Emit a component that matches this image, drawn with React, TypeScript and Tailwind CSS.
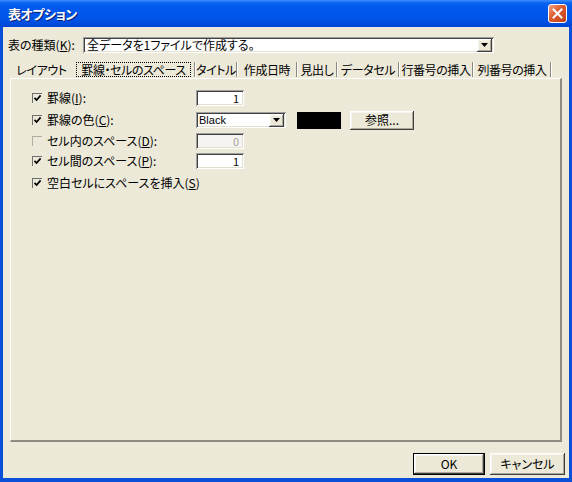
import React from 'react';

const bevelOut =
  'bg-[#ECE9D8] shadow-[inset_-1px_-1px_0_#404040,inset_1px_1px_0_#ffffff,inset_-2px_-2px_0_#ACA899,inset_2px_2px_0_#F5F4EF]';
const sunken =
  'shadow-[inset_1px_1px_0_#A0A0A0,inset_-1px_-1px_0_#ffffff,inset_2px_2px_0_#404040,inset_-2px_-2px_0_#E3E0D3]';

const Check: React.FC<{ checked?: boolean; disabled?: boolean }> = ({ checked, disabled }) => (
  <span
    className={
      'relative inline-block w-[10px] h-[10px] shrink-0 border-t border-l ' +
      (disabled ? 'border-[#B0AEA3]' : 'border-[#6F6F6F]')
    }
  >
    {checked && (
      <svg className="absolute left-[0px] top-[0px]" width="9" height="9" viewBox="0 0 9 9">
        <path d="M1.5 3.8 L3.6 6 L7.6 1.4" stroke="#000" strokeWidth="1.7" fill="none" />
      </svg>
    )}
  </span>
);

const DropBtn: React.FC = () => (
  <span className={'flex items-center justify-center w-[15px] h-[13px] ' + bevelOut}>
    <svg width="7" height="4" viewBox="0 0 7 4">
      <path d="M0 0 H7 L3.5 4 Z" fill="#000" />
    </svg>
  </span>
);

const NumBox: React.FC<{ value: string; disabled?: boolean }> = ({ value, disabled }) => (
  <div
    className={
      'w-[48px] h-[16px] flex items-center justify-end pr-[5px] ' +
      sunken +
      (disabled ? ' bg-[#F5F4F0] text-[#A6A39A]' : ' bg-white')
    }
  >
    <span className="text-[11px] leading-none">{value}</span>
  </div>
);

const Acc: React.FC<{ k: string }> = ({ k }) => <span className="underline underline-offset-[1px]">{k}</span>;

const tabs: { label: string; w: string; sel?: boolean; sep: boolean }[] = [
  { label: 'レイアウト', w: 'w-[63px]', sep: false },
  { label: '罫線・セルのスペース', w: 'w-[121px]', sel: true, sep: true },
  { label: 'タイトル', w: 'w-[40px]', sep: true },
  { label: '作成日時', w: 'w-[58px]', sep: true },
  { label: '見出し', w: 'w-[38px]', sep: true },
  { label: 'データセル', w: 'w-[60px]', sep: true },
  { label: '行番号の挿入', w: 'w-[72px]', sep: true },
  { label: '列番号の挿入', w: 'w-[76px]', sep: true },
];

export default function App() {
  return (
    <div className="w-[572px] h-[482px] flex flex-col bg-[#0A4FD8] text-[12px] text-black font-['Noto_Sans_CJK_JP','Noto_Sans',sans-serif] [font-feature-settings:'palt'] overflow-hidden">
      {/* title bar */}
      <div className="h-[27px] shrink-0 flex items-center justify-between pl-[8px] pr-[5px] bg-[linear-gradient(#3D8EFF_0px,#0A63F0_3px,#0058EE_8px,#0055E8_18px,#0047D8_27px)]">
        <span className="text-white font-bold text-[13px] [text-shadow:1px_1px_0_#0A1E6E] tracking-[-0.5px]">表オプション</span>
        <span className="w-[19px] h-[19px] rounded-[3px] border border-white flex items-center justify-center bg-[linear-gradient(135deg,#F0A386,#DE5A2E_45%,#C23F15)]">
          <svg width="11" height="11" viewBox="0 0 11 11">
            <path d="M1.5 1.5 L9.5 9.5 M9.5 1.5 L1.5 9.5" stroke="#fff" strokeWidth="2" strokeLinecap="square" />
          </svg>
        </span>
      </div>

      {/* body */}
      <div className="flex-1 mx-[3px] mb-[4px] bg-[#ECE9D8] flex flex-col">
        {/* table kind */}
        <div className="mt-[10px] pl-[5px] flex items-center h-[16px]">
          <span className="w-[75px] whitespace-nowrap">
            表の種類(<Acc k="K" />):
          </span>
          <div className={'w-[411px] h-[16px] bg-white flex items-center justify-between pl-[4px] pr-[2px] ' + sunken}>
            <span className="whitespace-nowrap leading-none">全データを1ファイルで作成する。</span>
            <DropBtn />
          </div>
        </div>

        {/* tabs */}
        <div className="mt-[8px] h-[17px] pl-[7px] flex items-stretch tracking-[-0.4px]">
          {tabs.map((t) => (
            <React.Fragment key={t.label}>
              <div className={t.w + ' relative flex items-center justify-center whitespace-nowrap'}>
                {t.sel && (
                  <span className="absolute left-[3px] right-[3px] top-[1px] bottom-[1px] border border-dotted border-black" />
                )}
                <span className="leading-none">{t.label}</span>
              </div>
              {t.sep && (
                <div className="w-[2px] my-[1px] border-l border-[#8A877C] bg-white" />
              )}
            </React.Fragment>
          ))}
        </div>

        {/* panel */}
        <div className="ml-[7px] w-[552px] h-[364px] border-t border-l border-white border-r-2 border-b-2 border-r-[#8E8B80] border-b-[#8E8B80] flex flex-col pl-[21px]">
          <div className="mt-[11px] h-[16px] flex items-center">
            <div className="w-[164px] flex items-center gap-[5px]">
              <Check checked />
              <span>
                罫線(<Acc k="I" />):
              </span>
            </div>
            <NumBox value="1" />
          </div>

          <div className="mt-[6px] h-[16px] flex items-center">
            <div className="w-[164px] flex items-center gap-[5px]">
              <Check checked />
              <span>
                罫線の色(<Acc k="C" />):
              </span>
            </div>
            <div className={'w-[90px] h-[16px] bg-white flex items-center justify-between pl-[3px] pr-[2px] ' + sunken}>
              <span className="text-[11px] leading-none font-['Liberation_Sans',sans-serif]">Black</span>
              <DropBtn />
            </div>
            <div className="ml-[11px] w-[44px] h-[17px] bg-black" />
            <div className={'ml-[9px] w-[64px] h-[19px] flex items-center justify-center ' + bevelOut}>
              <span className="leading-none">参照...</span>
            </div>
          </div>

          <div className="mt-[5px] h-[16px] flex items-center">
            <div className="w-[164px] flex items-center gap-[5px]">
              <Check disabled />
              <span className="text-black">
                セル内のスペース(<Acc k="D" />):
              </span>
            </div>
            <NumBox value="0" disabled />
          </div>

          <div className="mt-[4px] h-[16px] flex items-center">
            <div className="w-[164px] flex items-center gap-[5px]">
              <Check checked />
              <span>
                セル間のスペース(<Acc k="P" />):
              </span>
            </div>
            <NumBox value="1" />
          </div>

          <div className="mt-[6px] h-[16px] flex items-center gap-[5px]">
            <Check checked />
            <span>
              空白セルにスペースを挿入(<Acc k="S" />)
            </span>
          </div>
        </div>

        {/* buttons */}
        <div className="mt-[11px] flex justify-end pr-[4px] gap-[5px]">
          <div className="w-[72px] h-[22px] border border-black">
            <div className={'w-full h-full flex items-center justify-center ' + bevelOut}>
              <span className="leading-none">OK</span>
            </div>
          </div>
          <div className={'w-[75px] h-[22px] flex items-center justify-center ' + bevelOut}>
            <span className="leading-none">キャンセル</span>
          </div>
        </div>
      </div>
    </div>
  );
}
